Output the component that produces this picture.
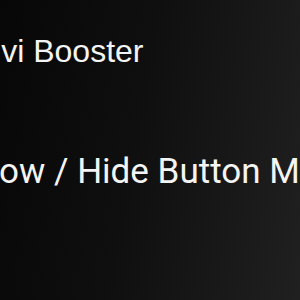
export default function App() {
  return (
    <div className="w-[300px] h-[300px] overflow-hidden bg-[linear-gradient(100deg,#070707_0%,#0f0f0f_45%,#202020_100%)] text-[#f4f4f4]">
      <div className="pt-[35px] -ml-[29px] whitespace-nowrap text-[32px] leading-[32px] font-['Liberation_Sans',Arial,sans-serif]">
        Divi Booster
      </div>
      <div className="pt-[87px] -ml-[41px] whitespace-nowrap text-[35px] leading-[35px] font-['Roboto',sans-serif]">
        Show / Hide Button Module
      </div>
    </div>
  );
}
